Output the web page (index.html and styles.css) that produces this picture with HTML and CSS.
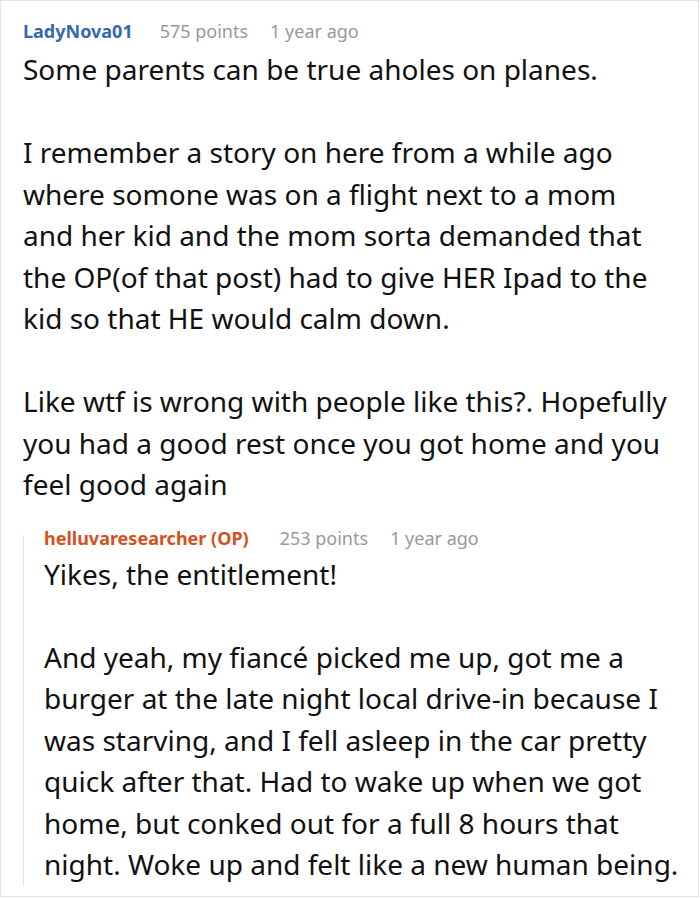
FILE: index.html
```html
<!DOCTYPE html>
<html>
<head>
<meta charset="utf-8">
<link rel="stylesheet" href="styles.css">
</head>
<body>
<div class="comment">
  <div class="meta">
    <span class="author">LadyNova01</span>
    <span class="info">575 points</span>
    <span class="info">1 year ago</span>
  </div>
  <div class="text">
    <p>Some parents can be true aholes on planes.</p>
    <p>I remember a story on here from a while ago where somone was on a flight next to a mom and her kid and the mom sorta demanded that the OP(of that post) had to give HER Ipad to the kid so that HE would calm down.</p>
    <p>Like wtf is wrong with people like this?. Hopefully you had a good rest once you got home and you feel good again</p>
  </div>
  <div class="reply">
    <div class="meta">
      <span class="author op">helluvaresearcher (OP)</span>
      <span class="info">253 points</span>
      <span class="info">1 year ago</span>
    </div>
    <div class="text">
      <p>Yikes, the entitlement!</p>
      <p>And yeah, my fiancé picked me up, got me a burger at the late night local drive-in because I was starving, and I fell asleep in the car pretty quick after that. Had to wake up when we got home, but conked out for a full 8 hours that night. Woke up and felt like a new human being.</p>
    </div>
  </div>
</div>
</body>
</html>
```
FILE: styles.css
```css
html, body {
  margin: 0;
  padding: 0;
  background: #fff;
}
.comment {
  box-sizing: border-box;
  width: 699px;
  height: 897px;
  border: 1px solid #e3e3e3;
  padding: 18px 30px 0 22px;
  font-family: "Noto Sans", sans-serif;
  color: #111;
  overflow: hidden;
}
.meta {
  display: flex;
  gap: 22px;
  font-size: 18px;
  line-height: 24px;
}
.author {
  font-weight: bold;
  color: #3767b1;
  margin-right: 5px;
}
.author.op {
  color: #d4511f;
  margin-right: 9px;
}
.info {
  color: #999;
}
.text {
  font-size: 28px;
  line-height: 41.5px;
  margin-top: 6px;
}
.text p {
  margin: 0 0 41.5px;
}
.text p:last-child {
  margin-bottom: 0;
}
.reply {
  position: relative;
  margin-top: 20px;
  padding-left: 21px;
  margin-right: -22px;
}
.reply::before {
  content: "";
  position: absolute;
  left: 0;
  top: 9px;
  bottom: 0;
  width: 1px;
  background: #e3e3e3;
}
.reply .text {
  margin-top: 4px;
}
```
